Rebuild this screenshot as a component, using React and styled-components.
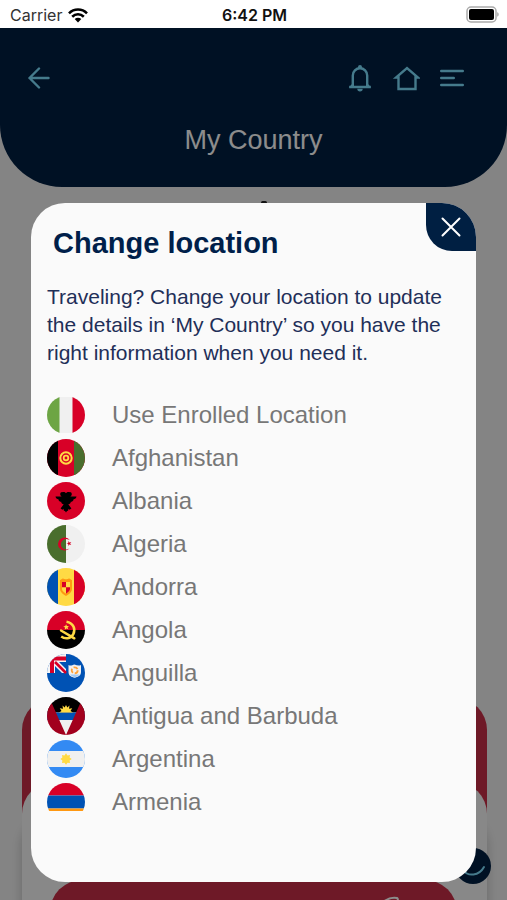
import { useState } from 'react'
import styled, { createGlobalStyle } from 'styled-components'

const GlobalStyle = createGlobalStyle`
  * { box-sizing: border-box; }

  body {
    margin: 0;
    font-family: "Liberation Sans", Arial, sans-serif;
    background-color: #fff;
  }

  button {
    border: none;
    padding: 0;
    background: transparent;
    font-family: inherit;
    cursor: pointer;
  }
`

const Screen = styled.div`
  display: flex;
  flex-direction: column;
  height: 100vh;
  overflow: hidden;
`

const StatusBar = styled.div`
  display: grid;
  grid-template-columns: 1fr auto 1fr;
  align-items: center;
  flex: none;
  height: 28px;
  padding: 2px 8px 0 10px;
  font-family: Inter, sans-serif;
  font-size: 16px;
  color: #333;
`

const Carrier = styled.span`
  display: flex;
  align-items: center;
  gap: 6px;
`

const Time = styled.time`
  font-weight: 600;
  color: #111;
`

const Battery = styled.svg`
  justify-self: end;
`

const Content = styled.main`
  position: relative;
  display: flex;
  flex-direction: column;
  flex: 1;
  min-height: 0;
  background-color: #f0f0f0;
`

const Header = styled.header`
  flex: none;
  padding: 34px 40px 30px 24px;
  border-radius: 0 0 62px 62px;
  background-color: #001f42;
  color: #7fe0ff;
`

const Toolbar = styled.div`
  display: flex;
  align-items: center;
  gap: 16px;
`

const IconButton = styled.button`
  display: flex;
  align-items: center;
  justify-content: center;
  width: 30px;
  height: 32px;
  margin-right: ${props => props.$push ? 'auto' : '0'};
  color: inherit;
`

const PageTitle = styled.h1`
  margin: 29px 0 0 16px;
  font-size: 27px;
  font-weight: normal;
  line-height: 34px;
  text-align: center;
  color: #fff;
`

const Marker = styled.span`
  flex: none;
  width: 6px;
  height: 3px;
  margin: 14px 0 0 20px;
  align-self: center;
  border-radius: 2px;
  background-color: #222;
`

const Card = styled.section`
  margin: auto 20px 0 22px;
  padding-top: 84px;
  border-radius: 32px 32px 0 0;
  background-color: #c82f47;
`

const CardPanel = styled.div`
  height: 118px;
  padding: 98px 30px 0 28px;
  overflow: hidden;
  border-radius: 32px 32px 0 0;
  background-color: #f8f8f8;
  box-shadow: 0 34px 8px 2px rgba(0, 0, 0, 0.15);
`

const CardButton = styled.button`
  display: flex;
  justify-content: flex-end;
  width: 100%;
  height: 64px;
  padding: 16px 56px 0 0;
  border-radius: 32px;
  background-color: #c82f47;
  color: #fff;
`

const ChatButton = styled.button`
  position: absolute;
  right: 16px;
  bottom: 16px;
  width: 36px;
  height: 36px;
  border-radius: 50%;
  background-color: #001f42;
  color: #7fe0ff;
`

const Overlay = styled.div`
  position: absolute;
  inset: 0;
  display: flex;
  padding: 175px 31px 18px;
  background-color: rgba(0, 0, 0, 0.45);
`

const Modal = styled.div`
  display: flex;
  flex-direction: column;
  flex: 1;
  min-width: 0;
  padding-bottom: 71px;
  overflow: hidden;
  border-radius: 34px;
  background-color: #fafafa;
  color: #001f4a;
`

const ModalHeader = styled.div`
  display: flex;
  justify-content: space-between;
  align-items: flex-start;
  padding-left: 22px;
`

const ModalTitle = styled.h2`
  margin: 22px 0 0;
  font-size: 29px;
  line-height: 36px;
`

const CloseButton = styled.button`
  display: flex;
  align-items: center;
  justify-content: center;
  width: 50px;
  height: 48px;
  border-radius: 0 0 0 26px;
  background-color: #001f42;
  color: #fff;
`

const Description = styled.p`
  margin: 22px 16px 26px;
  font-size: 21px;
  line-height: 28px;
  color: #1f2f58;
`

const CountryList = styled.ul`
  flex: 1;
  min-height: 0;
  margin: 0;
  padding: 0 16px;
  overflow-y: auto;
  scrollbar-width: none;
  list-style: none;
`

const CountryButton = styled.button`
  display: flex;
  align-items: center;
  gap: 27px;
  width: 100%;
  height: 43px;
  font-size: 24px;
  line-height: 16px;
  text-align: left;
  color: #777;
`

const FlagIcon = styled.svg`
  flex: none;
  width: 38px;
  height: 38px;
  border-radius: 50%;
`

// All flags are drawn on a 38x38 square, the circle comes from FlagIcon
const flags = {
  enrolled: (
    <>
      <path fill="#f0f0f0" d="M0 1h38v36H0z" />
      <path fill="#6da544" d="M0 1h12.500v36H0z" />
      <path fill="#d80027" d="M25.500 1H38v36H25.500z" />
    </>
  ),
  afghanistan: (
    <>
      <path fill="#d80027" d="M0 0h38v38H0z" />
      <path fill="#000" d="M0 0h11v38H0z" />
      <path fill="#496e2d" d="M27 0h11v38H27z" />
      <circle cx="19" cy="19" r="5.700" fill="none" stroke="#ffda44" strokeWidth="2" />
      <circle cx="19" cy="19" r="2.300" fill="none" stroke="#ffda44" strokeWidth="1.800" />
    </>
  ),
  albania: (
    <>
      <path fill="#d80027" d="M0 0h38v38H0z" />
      <path
        fill="#000"
        d="M29.500 14.500h-6.200a2.500 2.500 0 0 0 .6-4.200l-2.500-.3c-.9 0-1.800.5-2.400 1.200-.6-.7-1.500-1.200-2.400-1.200l-2.500.3a2.500 2.500 0 0 0 .6 4.200H8.500c.1 1.600 1.500 2.700 3 2.700h-.1c0 1.500 1.300 2.600 2.800 2.600 0 1.400 1 2.500 2.500 2.500l-3.100 4.300 1.900 1.100 1-.9.400 2 1.100.1L19 30.500l1-1.600 1.100-.1.400-2 1 .9 1.900-1.100-3.100-4.300c1.500 0 2.500-1.100 2.500-2.500 1.500 0 2.800-1.100 2.800-2.600h-.1c1.500 0 2.900-1.100 3-2.700z"
      />
    </>
  ),
  algeria: (
    <>
      <path fill="#f0f0f0" d="M0 0h38v38H0z" />
      <path fill="#496e2d" d="M0 0h19v38H0z" />
      <path fill="#d80027" d="M20 14.200a5.200 5.200 0 1 0 2.800 8.800 6.600 6.600 0 1 1 0-8 5.200 5.200 0 0 0-2.800-.8z" />
      <path fill="#d80027" d="m21.300 15.900 1.100 1.600 1.900-.6-1.200 1.600 1.200 1.600-1.900-.6-1.100 1.600v-2l-1.900-.6 1.900-.6z" />
    </>
  ),
  andorra: (
    <>
      <path fill="#ffda44" d="M0 0h38v38H0z" />
      <path fill="#0052b4" d="M0 0h11v38H0z" />
      <path fill="#d80027" d="M27 0h11v38H27z" />
      <path fill="#ff9811" d="M13 12c1.300 0 1.600-1.600 3-1.600.9 0 1.900.8 3 .8s2.100-.8 3-.8c1.400 0 1.700 1.600 3 1.600v9c0 4-6 7-6 7s-6-3-6-7z" />
      <path fill="#ffda44" d="M15 14h8v7c0 2.500-4 4.600-4 4.600S15 23.500 15 21z" />
      <path fill="#d80027" d="M15 14h4v5.200h-4zM19 19.200h4V21c0 2.500-4 4.600-4 4.600z" />
    </>
  ),
  angola: (
    <>
      <path fill="#d80027" d="M0 0h38v19H0z" />
      <path fill="#000" d="M0 19h38v19H0z" />
      <path fill="none" stroke="#ffda44" strokeWidth="2.500" d="M19.500 10.800c7 1.200 9.500 7.600 6.700 12.500-2.600 4.500-8 5.100-12 2.100" />
      <path fill="none" stroke="#ffda44" strokeWidth="2.500" strokeLinecap="round" d="m14 19.500 13.300 7.800" />
      <path fill="#ffda44" d="m19.100 13.200.8 1.800 2-.1-1.300 1.500.7 1.900-1.900-.8-1.600 1.200.2-2.100-1.700-1.100 2-.4z" />
    </>
  ),
  anguilla: (
    <>
      <path fill="#0052b4" d="M0 0h38v38H0z" />
      <path fill="#f5f5f5" d="M0 0h19v19H0z" />
      <path fill="#0052b4" d="M12 8h7v7zM8 12v7h7z" />
      <path stroke="#d80027" strokeWidth="2.600" d="m8 8 11 11" />
      <path fill="#d80027" d="M3 2.500h16v4H7V19H3z" />
      <path fill="#f0f0f0" d="M21.500 11c2 1 3.500.3 6-.5 2.300.8 4.500 1.500 6.500.5v7c0 4-3.500 5-6.300 5.800-3-.8-6.200-1.800-6.200-5.800z" />
      <path fill="#9cc7f5" d="M23 20.500h9.500c-1 1.700-3 2.200-4.700 2.800-1.600-.6-3.800-1.100-4.800-2.800z" />
      <circle cx="27.700" cy="16.300" r="3" fill="none" stroke="#ffa23a" strokeWidth="1.800" strokeDasharray="4.600 1.700" />
    </>
  ),
  antigua: (
    <>
      <path fill="#000" d="M0 0h38v15.500H0z" />
      <path fill="#0052b4" d="M0 15.500h38V23H0z" />
      <path fill="#f0f0f0" d="M0 23h38v15H0z" />
      <path fill="#a2001d" d="M0 0h2l17 38H0zM38 0h-2L19 38h19z" />
      <path fill="#ffda44" d="M12 15.500h14l-2.500-1.600 1.700-2.700-3.200.6.500-3.300-2.200 2.100L19 8l-1.300 2.600-2.200-2.100.5 3.300-3.200-.6 1.700 2.700z" />
    </>
  ),
  argentina: (
    <>
      <path fill="#338af3" d="M0 0h38v38H0z" />
      <path fill="#f0f0f0" d="M0 11h38v16H0z" />
      <path fill="#ffda44" d="m19 13.300 1.500 2.100 2.500-.5-.4 2.600 2.100 1.500-2.100 1.500.4 2.600-2.500-.4-1.500 2.100-1.500-2.100-2.500.4.400-2.600-2.100-1.500 2.100-1.500-.4-2.600 2.500.5z" />
    </>
  ),
  armenia: (
    <>
      <path fill="#d80027" d="M0 0h38v12.500H0z" />
      <path fill="#0052b4" d="M0 12.500h38v13H0z" />
      <path fill="#ff9811" d="M0 25.500h38V38H0z" />
    </>
  ),
}

const countries = [
  { flag: 'enrolled', name: 'Use Enrolled Location' },
  { flag: 'afghanistan', name: 'Afghanistan' },
  { flag: 'albania', name: 'Albania' },
  { flag: 'algeria', name: 'Algeria' },
  { flag: 'andorra', name: 'Andorra' },
  { flag: 'angola', name: 'Angola' },
  { flag: 'anguilla', name: 'Anguilla' },
  { flag: 'antigua', name: 'Antigua and Barbuda' },
  { flag: 'argentina', name: 'Argentina' },
  { flag: 'armenia', name: 'Armenia' },
]

function ChangeLocation({ onClose }) {
  return (
    <Overlay>
      <Modal role="dialog" aria-modal="true" aria-labelledby="modal-title">
        <ModalHeader>
          <ModalTitle id="modal-title">Change location</ModalTitle>
          <CloseButton aria-label="Close" onClick={onClose}>
            <svg width="20" height="20" fill="none" stroke="currentColor" strokeWidth="2" strokeLinecap="round">
              <path d="m1.500 1.500 17 17M18.500 1.500l-17 17" />
            </svg>
          </CloseButton>
        </ModalHeader>
        <Description>
          Traveling? Change your location to update the details in ‘My Country’ so you have the
          right information when you need it.
        </Description>
        <CountryList>
          {countries.map(country => (
            <li key={country.flag}>
              <CountryButton onClick={onClose}>
                <FlagIcon viewBox="0 0 38 38" aria-hidden="true">{flags[country.flag]}</FlagIcon>
                {country.name}
              </CountryButton>
            </li>
          ))}
        </CountryList>
      </Modal>
    </Overlay>
  )
}

function App() {
  const [modalOpen, setModalOpen] = useState(true)

  return (
    <Screen>
      <GlobalStyle />
      <StatusBar>
        <Carrier>
          Carrier
          <svg width="20" height="15" viewBox="0 0 20 15" fill="none" stroke="#000" strokeWidth="2.600" aria-hidden="true">
            <path d="M1 5.300c5-5 13-5 18 0M4.200 8.700c3.300-3.200 8.300-3.200 11.600 0" />
            <path fill="#000" stroke="none" d="M6.700 11.100c1.900-1.700 4.700-1.700 6.600 0L10 14.500z" />
          </svg>
        </Carrier>
        <Time>6:42 PM</Time>
        <Battery width="34" height="18" viewBox="0 0 34 18" aria-hidden="true">
          <rect x="2" y="1" width="29" height="15" rx="4" fill="#fff" stroke="#aaa" strokeWidth="1.500" />
          <rect x="4" y="3" width="25" height="11" rx="2" fill="#000" />
          <path fill="#aaa" d="M32.200 6.300c2 .6 2 3.800 0 4.400z" />
        </Battery>
      </StatusBar>
      <Content>
        <Header>
          <Toolbar>
            <IconButton $push aria-label="Back">
              <svg width="22" height="22" fill="none" stroke="currentColor" strokeWidth="2.400" strokeLinecap="round" strokeLinejoin="round">
                <path d="M20.500 11h-19M11 1.500 1.500 11l9.500 9.500" />
              </svg>
            </IconButton>
            <IconButton aria-label="Notifications">
              <svg width="24" height="28" viewBox="0 0 24 28" fill="none" stroke="currentColor" strokeWidth="2.400">
                <path d="M1.200 23h21.600M4.800 23V11.500a7.200 7.200 0 0 1 14.400 0V23" />
                <path fill="currentColor" stroke="none" d="M9.300 24.800h5.400a2.700 2.700 0 0 1-5.400 0zM10 4.500V3a2 2 0 0 1 4 0v1.500zM4 20 .8 23.500h3.700zM20 20l3.200 3.500h-3.700z" />
              </svg>
            </IconButton>
            <IconButton aria-label="Home">
              <svg width="28" height="26" viewBox="0 0 28 26" fill="none" stroke="currentColor" strokeWidth="2.400">
                <path d="M6.500 12.500H4L15 3l11 9.500h-2.500V24h-17z" />
              </svg>
            </IconButton>
            <IconButton aria-label="Menu">
              <svg width="24" height="18" stroke="currentColor" strokeWidth="2.400" strokeLinecap="round">
                <path d="M1.200 2h21.600M1.200 9h12.600M1.200 16h21.600" />
              </svg>
            </IconButton>
          </Toolbar>
          <PageTitle>My Country</PageTitle>
        </Header>
        <Marker />
        <Card>
          <CardPanel>
            <CardButton aria-label="Call">
              <svg width="20" height="16" fill="none" stroke="currentColor" strokeWidth="2">
                <path d="M2 6c4-3 9-5 14-4 2 1 0 4-2 6" />
              </svg>
            </CardButton>
          </CardPanel>
        </Card>
        <ChatButton aria-label="Chat">
          <svg width="36" height="36" fill="none" stroke="currentColor" strokeWidth="2" strokeLinecap="round">
            <path d="M8 22c5 7 16 6 21-3" />
          </svg>
        </ChatButton>
        {modalOpen && <ChangeLocation onClose={() => setModalOpen(false)} />}
      </Content>
    </Screen>
  )
}

export default App
